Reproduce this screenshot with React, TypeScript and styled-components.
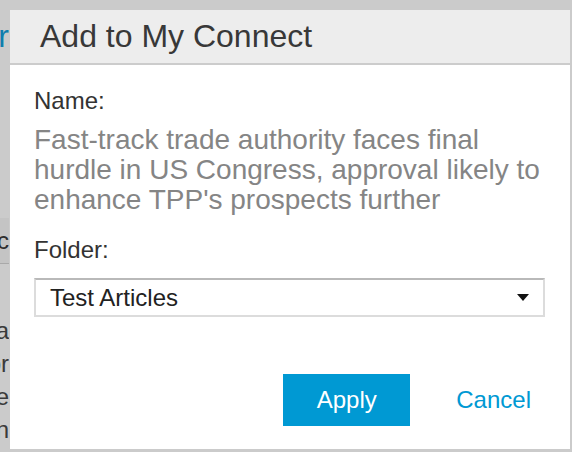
import React from "react";
import styled, { createGlobalStyle } from "styled-components";

const Global = createGlobalStyle`
  html, body { margin: 0; padding: 0; }
  body {
    font-family: "Liberation Sans", Arial, Helvetica, sans-serif;
    background: #cbcbcb;
  }
`;

const Screen = styled.div`
  position: relative;
  width: 572px;
  height: 452px;
  overflow: hidden;
  background: #cbcbcb;
`;

const BackdropStrip = styled.div`
  width: 9px;
  height: 100%;
  overflow: hidden;
  display: flex;
  flex-direction: column;
`;

const BackHeading = styled.div`
  margin-top: 20px;
  height: 32px;
  display: flex;
  justify-content: flex-end;
  white-space: nowrap;
  font-size: 32px;
  line-height: 32px;
  color: #0f7eae;
`;

const BackBand = styled.div`
  margin-top: 166px;
  height: 45px;
  display: flex;
  align-items: center;
  justify-content: flex-end;
  white-space: nowrap;
  background: #c4c4c4;
  border-bottom: 1px solid #a9a9a9;
  font-size: 24px;
  color: #2e2e2e;
`;

const BackLines = styled.div`
  margin-top: 52px;
  display: flex;
  flex-direction: column;
`;

const BackLine = styled.div`
  height: 33px;
  display: flex;
  justify-content: flex-end;
  white-space: nowrap;
  font-size: 24px;
  line-height: 30px;
  color: #3a3a3a;
`;

const Dialog = styled.div`
  position: absolute;
  left: 10px;
  top: 10px;
  width: 560px;
  height: 439px;
  background: #ffffff;
  display: flex;
  flex-direction: column;
`;

const Header = styled.div`
  height: 53px;
  line-height: 53px;
  padding: 0 30px;
  background: #ededed;
  border-bottom: 2px solid #cccccc;
  font-size: 32px;
  color: #383838;
  white-space: nowrap;
`;

const Body = styled.div`
  padding: 22px 25px 0 24px;
  display: flex;
  flex-direction: column;
`;

const Label = styled.div<{ $gap?: number }>`
  margin-top: ${(p) => p.$gap ?? 0}px;
  font-size: 24px;
  line-height: 28px;
  color: #333333;
`;

const Headline = styled.div`
  margin-top: 10px;
  font-size: 28px;
  line-height: 30px;
  color: #858585;
`;

const SelectBox = styled.div`
  margin-top: 14px;
  height: 39px;
  box-sizing: border-box;
  display: flex;
  align-items: center;
  justify-content: space-between;
  padding: 0 14px 0 14px;
  border: 2px solid #dcdcdc;
  border-top-color: #b9b9b9;
  font-size: 24px;
  color: #222222;
  cursor: pointer;
`;

const Footer = styled.div`
  margin-top: 57px;
  display: flex;
  justify-content: flex-end;
  align-items: center;
  gap: 30px;
`;

const ApplyButton = styled.button`
  width: 127px;
  height: 52px;
  border: none;
  border-radius: 0;
  background: #0099d3;
  color: #ffffff;
  font-family: inherit;
  font-size: 24px;
  padding: 0;
  cursor: pointer;
`;

const CancelButton = styled.button`
  height: 52px;
  border: none;
  background: transparent;
  color: #0099d3;
  font-family: inherit;
  font-size: 24px;
  padding: 0 14px 0 16px;
  cursor: pointer;
`;

const Caret = () => (
  <svg width="12" height="7" viewBox="0 0 12 7" aria-hidden="true">
    <path d="M0 0 H12 L6 7 Z" fill="#111111" />
  </svg>
);

export default function App() {
  return (
    <Screen>
      <Global />
      <BackdropStrip>
        <BackHeading>Filter</BackHeading>
        <BackBand>Doc</BackBand>
        <BackLines>
          <BackLine>data</BackLine>
          <BackLine>for</BackLine>
          <BackLine>note</BackLine>
          <BackLine>in</BackLine>
        </BackLines>
      </BackdropStrip>
      <Dialog role="dialog" aria-label="Add to My Connect">
        <Header>Add to My Connect</Header>
        <Body>
          <Label>Name:</Label>
          <Headline>
            Fast-track trade authority faces final hurdle in US Congress,
            approval likely to enhance TPP's prospects further
          </Headline>
          <Label $gap={21}>Folder:</Label>
          <SelectBox role="combobox">
            <span>Test Articles</span>
            <Caret />
          </SelectBox>
          <Footer>
            <ApplyButton>Apply</ApplyButton>
            <CancelButton>Cancel</CancelButton>
          </Footer>
        </Body>
      </Dialog>
    </Screen>
  );
}
